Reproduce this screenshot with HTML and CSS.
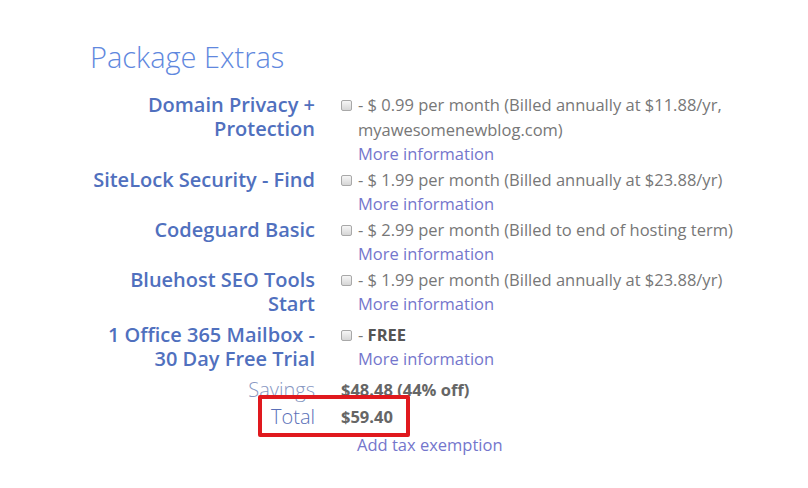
FILE: index.html
```html
<!DOCTYPE html>
<html>
<head>
<meta charset="utf-8">
<link rel="stylesheet" href="styles.css">
</head>
<body>
<div class="page">
  <h1 class="title">Package Extras</h1>
  <div class="extras">
    <div class="label">Domain Privacy + Protection</div>
    <div class="value"><span class="cb"></span><div class="text">- $ 0.99 per month (Billed annually at $11.88/yr, myawesomenewblog.com)<br><a class="more">More information</a></div></div>

    <div class="label">SiteLock Security - Find</div>
    <div class="value"><span class="cb"></span><div class="text">- $ 1.99 per month (Billed annually at $23.88/yr)<br><a class="more">More information</a></div></div>

    <div class="label">Codeguard Basic</div>
    <div class="value"><span class="cb"></span><div class="text">- $ 2.99 per month (Billed to end of hosting term)<br><a class="more">More information</a></div></div>

    <div class="label">Bluehost SEO Tools Start</div>
    <div class="value"><span class="cb"></span><div class="text">- $ 1.99 per month (Billed annually at $23.88/yr)<br><a class="more">More information</a></div></div>

    <div class="label">1 Office 365 Mailbox - 30 Day Free Trial</div>
    <div class="value"><span class="cb"></span><div class="text">- <b class="free">FREE</b><br><a class="more">More information</a></div></div>
  </div>
  <div class="totals">
    <div class="tlabel savings">Savings</div>
    <div class="tvalue">$48.48 (44% off)</div>
  </div>
  <div class="totals total-row">
    <div class="tlabel total">Total</div>
    <div class="tvalue">$59.40</div>
  </div>
  <div class="totals">
    <div class="tlabel"></div>
    <div class="tax"><a class="more">Add tax exemption</a></div>
  </div>
</div>
</body>
</html>
```
FILE: styles.css
```css
html, body {
  margin: 0;
  padding: 0;
  background: #ffffff;
}
body {
  font-family: "Open Sans", "DejaVu Sans", sans-serif;
  width: 808px;
  height: 488px;
  overflow: hidden;
}
.page {
  padding: 37px 0 0 90px;
}
.title {
  margin: 0 0 16px 0;
  font-size: 29px;
  font-weight: 300;
  line-height: 40px;
  color: #5f88de;
}
.extras {
  display: grid;
  grid-template-columns: 225px 440px;
  column-gap: 26px;
  align-items: start;
}
.label {
  text-align: right;
  font-size: 20px;
  font-weight: 600;
  line-height: 24px;
  color: #5070be;
  padding-bottom: 7px;
}
.value {
  display: flex;
  align-items: flex-start;
  font-size: 16.5px;
  line-height: 24.5px;
  color: #777777;
  padding-bottom: 1px;
}
.cb {
  flex: none;
  display: block;
  width: 9px;
  height: 9px;
  margin: 7px 6px 0 0;
  border: 1px solid #a8a8a8;
  border-radius: 2px;
  background: linear-gradient(#f6f6f6, #d6d6d6);
}
.text {
  flex: 1;
}
.more {
  color: #7476cc;
  text-decoration: none;
}
.free {
  font-weight: 700;
  color: #555555;
}
.totals {
  display: grid;
  grid-template-columns: 225px auto;
  column-gap: 26px;
  width: 480px;
}
.tlabel {
  text-align: right;
  font-size: 20px;
  font-weight: 300;
  line-height: 24px;
}
.savings {
  color: #8797c2;
}
.total {
  color: #5a70b8;
}
.tvalue {
  font-size: 16.5px;
  font-weight: 700;
  color: #666666;
  line-height: 24px;
}
.total-row {
  position: relative;
}
.total-row .tlabel, .total-row .tvalue {
  line-height: 30px;
}
.total-row::before {
  content: "";
  position: absolute;
  left: 168px;
  top: -7px;
  width: 144px;
  height: 34px;
  border: 4px solid #e0191e;
  border-radius: 2px;
}
.tax {
  font-size: 16.5px;
  line-height: 26px;
  padding-left: 16px;
}
```
